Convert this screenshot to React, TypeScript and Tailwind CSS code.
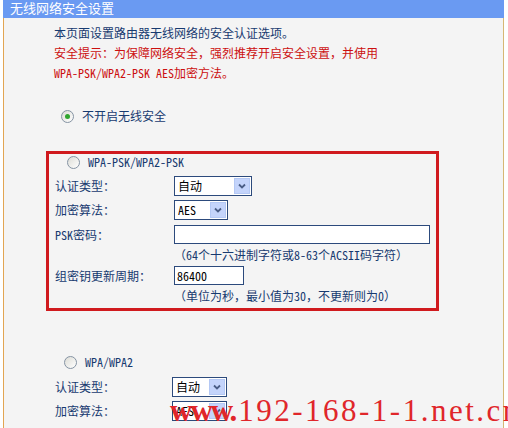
import React from 'react';

const cjk = { fontFamily: '"Noto Sans Mono CJK SC", "Noto Sans CJK SC", "DejaVu Sans Mono", monospace' };

const Radio: React.FC<{ checked?: boolean }> = ({ checked }) => (
  <span className="flex items-center justify-center w-[13px] h-[13px] rounded-full border border-[#8593a3] bg-gradient-to-br from-[#dcdcd6] to-white">
    {checked && <span className="w-[5px] h-[5px] rounded-full bg-[#2fa52f]" />}
  </span>
);

const Select: React.FC<{ value: string; width: string }> = ({ value, width }) => (
  <div className={`${width} h-[20px] flex items-center bg-white border border-[#2c4a7c] pl-[3px] pr-[1px]`}>
    <span className="flex-1 text-[12px] text-black leading-none">{value}</span>
    <span className="w-[16px] h-[16px] flex items-center justify-center bg-[#c4d4fb] border border-[#b4c8f4]">
      <svg width="8" height="6" viewBox="0 0 8 6">
        <path d="M1 1.5 L4 4.5 L7 1.5" fill="none" stroke="#4a5d86" strokeWidth="1.8" />
      </svg>
    </span>
  </div>
);

const Label: React.FC<{ children: React.ReactNode }> = ({ children }) => (
  <span className="text-[12px] text-[#173a70]">{children}</span>
);

export default function App() {
  return (
    <div className="relative w-[508px] h-[428px] overflow-hidden bg-white" style={cjk}>
      <div className="ml-[3px] w-[501px]">
        {/* Title bar */}
        <div className="h-[18px] bg-[#6a9af2] pl-[7px] flex items-center">
          <span className="text-white text-[13px] leading-none -mt-[3px]">无线网络安全设置</span>
        </div>

        {/* Body */}
        <div className="h-[410px] bg-[#f4f4f4] border-l border-l-[#e2a552] border-r border-r-[#d6b774] pt-[5px]">
          <div className="pl-[50px] text-[12px] leading-[20px]">
            <p className="text-[#173a70]">本页面设置路由器无线网络的安全认证选项。</p>
            <p className="text-[#cc1010]">安全提示：为保障网络安全，强烈推荐开启安全设置，并使用</p>
            <p className="text-[#cc1010]">WPA-PSK/WPA2-PSK AES加密方法。</p>
          </div>

          <div className="mt-[23px] h-[20px] pl-[57px] flex items-center gap-[8px]">
            <Radio checked />
            <Label>不开启无线安全</Label>
          </div>

          {/* WPA-PSK box */}
          <div className="mt-[25px] ml-[42px] w-[393px] h-[160px] border-[3px] border-[#d01a1e] pl-[6px]">
            <div className="h-[16px] pl-[12px] flex items-center gap-[8px]">
              <Radio />
              <Label>WPA-PSK/WPA2-PSK</Label>
            </div>
            <div className="grid grid-cols-[119px_1fr] items-center">
              <div className="mt-[6px] h-[20px] flex items-center"><Label>认证类型：</Label></div>
              <div className="mt-[6px]"><Select value="自动" width="w-[78px]" /></div>
              <div className="mt-[4px] h-[20px] flex items-center"><Label>加密算法：</Label></div>
              <div className="mt-[4px]"><Select value="AES" width="w-[54px]" /></div>
              <div className="mt-[5px] h-[19px] flex items-center"><Label>PSK密码：</Label></div>
              <div className="mt-[5px]"><div className="w-[256px] h-[19px] bg-white border border-[#2c4a7c]" /></div>
              <div />
              <div className="h-[22px] flex items-center"><Label>（64个十六进制字符或8-63个ACSII码字符）</Label></div>
              <div className="h-[20px] flex items-center"><Label>组密钥更新周期：</Label></div>
              <div className="h-[20px]">
                <div className="w-[70px] h-[19px] bg-white border border-[#2c4a7c] pl-[2px] flex items-center text-[12px] text-black">86400</div>
              </div>
              <div />
              <div className="h-[20px] flex items-center"><Label>（单位为秒，最小值为30，不更新则为0）</Label></div>
            </div>
          </div>

          {/* WPA box */}
          <div className="mt-[41px] h-[20px] pl-[60px] flex items-center gap-[8px]">
            <Radio />
            <Label>WPA/WPA2</Label>
          </div>
          <div className="pl-[51px] grid grid-cols-[117px_1fr] items-center">
            <div className="mt-[5px] h-[20px] flex items-center"><Label>认证类型：</Label></div>
            <div className="mt-[5px]"><Select value="自动" width="w-[55px]" /></div>
            <div className="mt-[4px] h-[20px] flex items-center"><Label>加密算法：</Label></div>
            <div className="mt-[4px]"><Select value="AES" width="w-[55px]" /></div>
          </div>
        </div>
      </div>

      {/* Watermark */}
      <div
        className="absolute left-[170px] top-[395px] whitespace-nowrap text-[31px] leading-none text-[#e0262a]"
        style={{ fontFamily: '"Liberation Serif", serif' }}
      >
        <span className="font-bold tracking-[-2px]">www.</span>
        <span className="ml-[3px] tracking-[2.5px]">192-168-1-1.net.cn</span>
      </div>
    </div>
  );
}
